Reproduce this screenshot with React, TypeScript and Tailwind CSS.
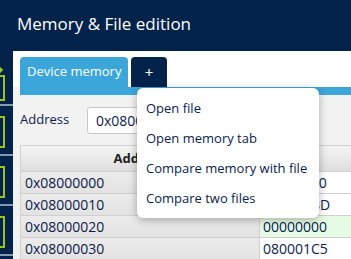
import React from "react";

const font = { fontFamily: '"Open Sans", "Noto Sans", sans-serif' };

function SideIcon() {
  return (
    <div className="relative h-[50px] border-b-2 border-[#8a98ad]">
      <div className="absolute left-[-20px] top-[10px] h-[32px] w-[25px] border-2 border-[#9dc21c]" />
    </div>
  );
}

const rows = [
  { a: "0x08000000", v: "200004E0", bg: "bg-white" },
  { a: "0x08000010", v: "080001BD", bg: "bg-white" },
  { a: "0x08000020", v: "00000000", bg: "bg-[#e6fbe4]" },
  { a: "0x08000030", v: "080001C5", bg: "bg-white" },
];

export default function App() {
  return (
    <div className="relative h-[259px] w-[351px] overflow-hidden bg-[#03234b]" style={font}>
      <div className="flex h-[51px] items-center pl-[17px] pb-[3px] text-[17px] text-white">
        Memory &amp; File edition
      </div>
      <div className="flex h-[208px]">
        <div className="w-[13px] overflow-hidden">
          <div className="h-[6px]" />
          <div className="relative h-[49px] border-b-2 border-[#8a98ad]">
            <div className="absolute left-[-4px] top-[10px] h-[6px] w-[6px] rotate-45 bg-[#9dc21c]" />
            <div className="absolute left-[-20px] top-[18px] h-[26px] w-[25px] border-2 border-[#9dc21c]" />
          </div>
          <SideIcon />
          <SideIcon />
          <SideIcon />
        </div>
        <div className="flex-1 bg-[#f2f2f2]">
          <div className="h-[6px] bg-white" />
          <div className="flex gap-[3px] bg-white pl-[7px]">
            <div className="flex h-[30px] w-[108px] items-center whitespace-nowrap rounded-t-[4px] bg-[#3ba6da] pl-[7px] text-[13px] text-white">
              Device memory
            </div>
            <div className="flex h-[30px] w-[36px] items-center justify-center rounded-t-[4px] bg-[#03234b] text-[15px] text-white">
              +
            </div>
          </div>
          <div className="ml-[7px] h-[8px] bg-[#3ba6da]" />
          <div className="flex h-[50px] items-center pl-[7px]">
            <span className="w-[67px] text-[13px] text-[#0a2250]">Address</span>
            <div className="flex h-[27px] w-[200px] items-center rounded-[3px] border border-[#c8c8c8] bg-white pl-[8px] text-[14px] text-[#0a2250]">
              0x08000000
            </div>
          </div>
          <div className="ml-[7px] border-l border-t border-[#d0d0d0]">
            <div className="flex h-[25px]">
              <div className="flex w-[238px] items-center justify-center border-r border-[#d0d0d0] bg-gradient-to-b from-[#f4f4f4] to-[#dedede] text-[13px] font-bold text-[#222]">
                Address
              </div>
              <div className="flex flex-1 items-center justify-center bg-gradient-to-b from-[#f4f4f4] to-[#dedede] text-[13px] font-bold text-[#222]">
                0
              </div>
            </div>
            {rows.map((r) => (
              <div key={r.a} className="flex h-[22px] border-t border-[#d0d0d0]">
                <div className="flex w-[238px] items-center bg-gradient-to-b from-[#ececec] to-[#e2e2e2] pl-[4px] text-[14px] text-[#0a2250]">
                  {r.a}
                </div>
                <div className={`flex flex-1 items-center border-l border-[#d0d0d0] pl-[3px] text-[14px] text-[#0a2250] ${r.bg}`}>
                  {r.v}
                </div>
              </div>
            ))}
          </div>
        </div>
      </div>
      <div className="absolute left-[137px] top-[88px] w-[182px] rounded-[6px] bg-white pt-[6px] pb-[4px] text-[13px] text-[#0a2250] shadow-[0_2px_8px_rgba(0,0,0,0.3)]">
        <div className="flex h-[30px] items-center whitespace-nowrap pl-[9px]">Open file</div>
        <div className="flex h-[30px] items-center whitespace-nowrap pl-[9px]">Open memory tab</div>
        <div className="flex h-[30px] items-center whitespace-nowrap pl-[9px]">Compare memory with file</div>
        <div className="flex h-[30px] items-center whitespace-nowrap pl-[9px]">Compare two files</div>
      </div>
    </div>
  );
}
